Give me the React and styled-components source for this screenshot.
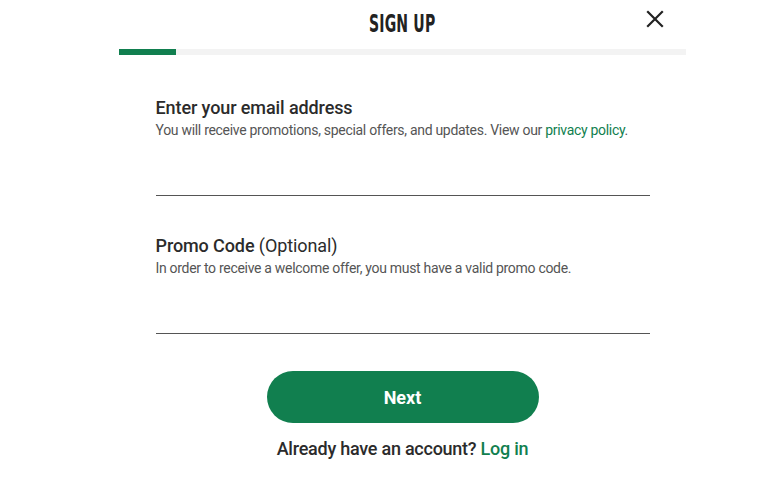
import React from "react"
import styled, { createGlobalStyle } from "styled-components"

const GlobalStyle = createGlobalStyle`
  html, body {
    margin: 0;
    padding: 0;
    background: #ffffff;
  }
  body {
    font-family: Roboto, "Liberation Sans", sans-serif;
    color: #2b2b2b;
  }
`

const green = "#117f4f"

const Page = styled.div`
  width: 768px;
  height: 482px;
  box-sizing: border-box;
  padding-left: 37px;
  display: flex;
  flex-direction: column;
  align-items: center;
  overflow: hidden;
`

const Header = styled.header`
  width: 567px;
  height: 49px;
  display: flex;
  align-items: center;
  justify-content: center;
  position: relative;
`

const Title = styled.h1`
  margin: 0;
  font-family: "DejaVu Sans Condensed", "Liberation Sans Narrow", sans-serif;
  font-weight: 700;
  font-size: 24px;
  letter-spacing: 0.3px;
  color: #222;
  transform: scaleX(0.65);
  padding-bottom: 2px;
`

const CloseButton = styled.button`
  position: absolute;
  right: 20px;
  top: 8px;
  width: 22px;
  height: 22px;
  border: 0;
  padding: 0;
  background: none;
  cursor: pointer;
  display: flex;
  align-items: center;
  justify-content: center;
`

const Progress = styled.div`
  width: 567px;
  height: 6px;
  background: #f3f3f3;
  display: flex;
`

const ProgressFill = styled.div`
  height: 100%;
  background: ${green};
`

const Form = styled.form`
  width: 494px;
  display: flex;
  flex-direction: column;
  padding-top: 42px;
`

const Field = styled.div`
  display: flex;
  flex-direction: column;
  margin-bottom: 39px;
`

const Label = styled.label`
  font-size: 18px;
  font-weight: 500;
  color: #2b2b2b;
  line-height: 22px;
  letter-spacing: -0.1px;
`

const Optional = styled.span`
  font-weight: 400;
`

const Help = styled.p`
  margin: 2px 0 0;
  font-size: 14px;
  line-height: 18px;
  color: #555;
  letter-spacing: -0.3px;
`

const GreenLink = styled.a`
  color: ${green};
  text-decoration: none;
  cursor: pointer;
`

const Input = styled.input`
  margin-top: 23px;
  height: 33px;
  border: 0;
  border-bottom: 1px solid #555;
  outline: none;
  font-size: 16px;
  font-family: inherit;
  background: transparent;
  padding: 0;
`

const Actions = styled.div`
  display: flex;
  flex-direction: column;
  align-items: center;
  margin-top: -2px;
`

const NextButton = styled.button`
  width: 272px;
  height: 52px;
  border-radius: 26px;
  border: 0;
  background: ${green};
  color: #fff;
  font-family: Roboto, "Liberation Sans", sans-serif;
  font-size: 18px;
  font-weight: 700;
  cursor: pointer;
`

const LoginLine = styled.p`
  margin: 15px 0 0;
  font-size: 18px;
  font-weight: 500;
  color: #2b2b2b;
  letter-spacing: -0.25px;
`

const CloseIcon = () => (
  <svg width="18" height="18" viewBox="0 0 18 18" fill="none">
    <path d="M2 2L16 16M16 2L2 16" stroke="#222" strokeWidth="2.2" strokeLinecap="square" />
  </svg>
)

export default function App() {
  return (
    <>
      <GlobalStyle />
      <Page>
        <Header>
          <Title>SIGN UP</Title>
          <CloseButton aria-label="Close">
            <CloseIcon />
          </CloseButton>
        </Header>
        <Progress>
          <ProgressFill style={{ width: "10%" }} />
        </Progress>
        <Form onSubmit={e => e.preventDefault()}>
          <Field>
            <Label htmlFor="email">Enter your email address</Label>
            <Help>
              You will receive promotions, special offers, and updates. View our{" "}
              <GreenLink>privacy policy</GreenLink>.
            </Help>
            <Input id="email" type="email" />
          </Field>
          <Field>
            <Label htmlFor="promo">
              Promo Code <Optional>(Optional)</Optional>
            </Label>
            <Help>In order to receive a welcome offer, you must have a valid promo code.</Help>
            <Input id="promo" type="text" />
          </Field>
          <Actions>
            <NextButton type="submit">Next</NextButton>
            <LoginLine>
              Already have an account? <GreenLink>Log in</GreenLink>
            </LoginLine>
          </Actions>
        </Form>
      </Page>
    </>
  )
}
